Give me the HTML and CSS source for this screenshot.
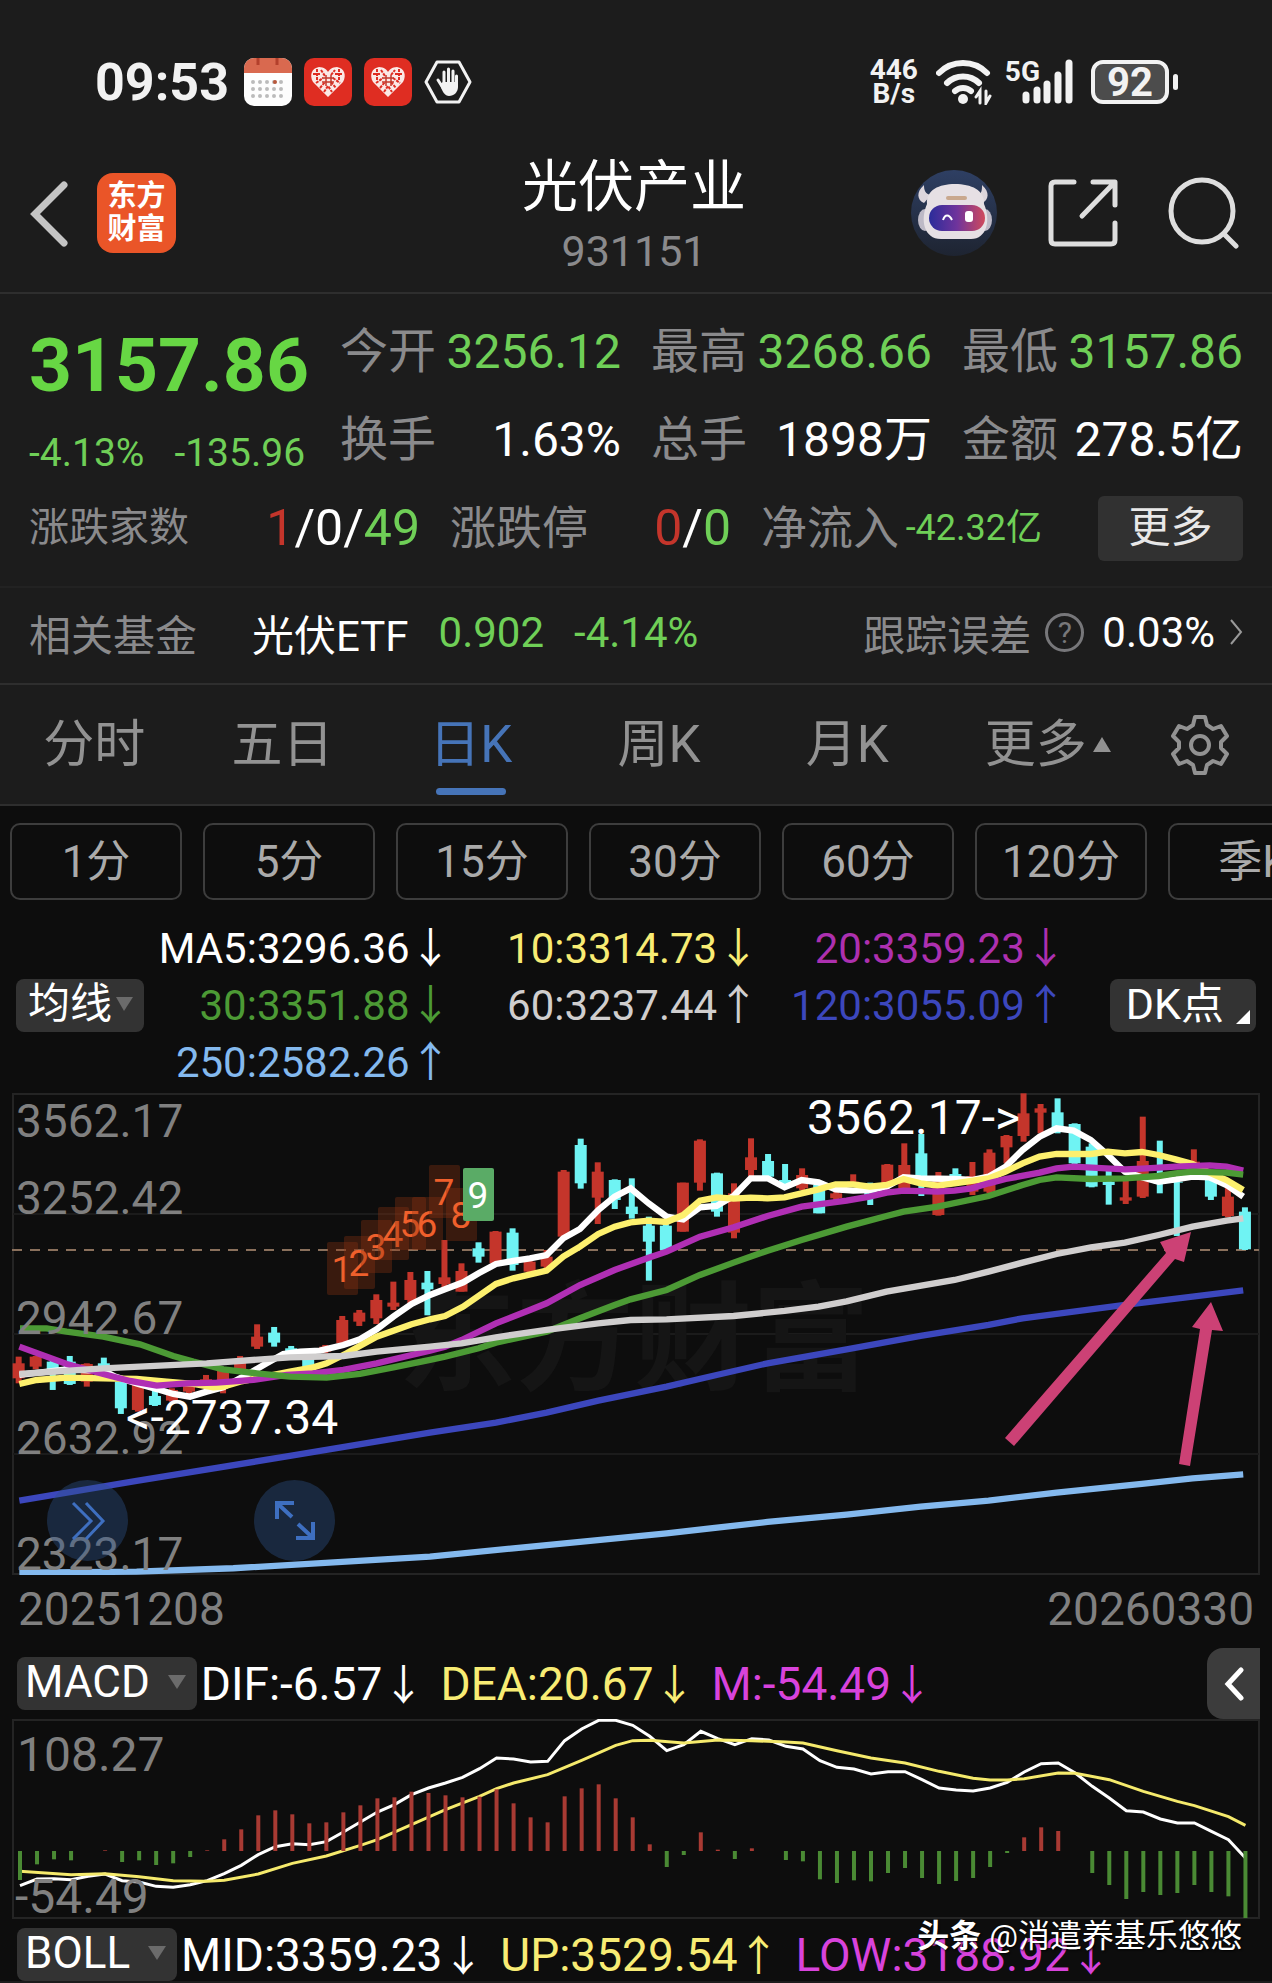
FILE: index.html
```
<!DOCTYPE html>
<html lang="zh-CN">
<head>
  <meta charset="UTF-8">
  <meta name="viewport" content="width=device-width, initial-scale=1">
  <title>光伏产业 931151</title>
  <link rel="stylesheet" href="styles.css">
</head>
<body>
  <div class="status">
    <span class="time">09:53</span>
    <svg class="app-icon" viewBox="0 0 48 48" aria-hidden="true">
      <rect width="48" height="48" rx="10" fill="#fdfdfd"/>
      <path d="M0 15V10A10 10 0 0 1 10 0H38A10 10 0 0 1 48 10V15Z" fill="#d9694f"/>
      <path d="M14 0V7M33 0V7" stroke="#b3402c" stroke-width="3"/>
      <path d="M9 24H40M9 31H40M9 38H40" stroke="#bbb" stroke-width="4" stroke-linecap="round" stroke-dasharray="0 7"/>
      <circle cx="31" cy="24" r="2" fill="#b8583c"/>
    </svg>
    <svg class="app-icon" viewBox="0 0 48 48" aria-hidden="true">
      <rect width="48" height="48" rx="10" fill="#df2d22"/>
      <path d="M24 39L9 24C5 17 8 10 15 9C20 9 23 12 24 14C25 12 28 9 33 9C40 10 43 17 39 24Z" fill="#fbe9e6"/>
      <path d="M9 16H17M13 11V23M17 12L21 18M12 25L19 20M16 30L21 24M20 34L24 28L28 34M27 24L32 30M29 20L36 25M31 16H39M35 11V23M27 17L31 12" stroke="#df2d22" stroke-width="2" fill="none" stroke-dasharray="3 1"/>
      <path d="M18 20H30M18 24H30M22 17V28M27 17V28" stroke="#c33a2c" stroke-width="1.5"/>
    </svg>
    <svg class="app-icon" viewBox="0 0 48 48" aria-hidden="true">
      <rect width="48" height="48" rx="10" fill="#df2d22"/>
      <path d="M24 39L9 24C5 17 8 10 15 9C20 9 23 12 24 14C25 12 28 9 33 9C40 10 43 17 39 24Z" fill="#fbe9e6"/>
      <path d="M9 16H17M13 11V23M17 12L21 18M12 25L19 20M16 30L21 24M20 34L24 28L28 34M27 24L32 30M29 20L36 25M31 16H39M35 11V23M27 17L31 12" stroke="#df2d22" stroke-width="2" fill="none" stroke-dasharray="3 1"/>
      <path d="M18 20H30M18 24H30M22 17V28M27 17V28" stroke="#c33a2c" stroke-width="1.5"/>
    </svg>
    <svg class="app-icon" viewBox="0 0 48 48" aria-hidden="true">
      <path d="M13 4H35L46 24L35 44H13L2 24Z" fill="none" stroke="#f2f2f2" stroke-width="3" stroke-linejoin="round"/>
      <path d="M14 22L19 30M20 14V26M24.500 11V26M29 13V26M32.500 18V28" stroke="#f2f2f2" stroke-width="3" stroke-linecap="round"/>
      <path d="M16 26L19 24H34V29C34 34 30 38 25 38C21 38 18 34 16 26Z" fill="#f2f2f2"/>
    </svg>
    <div class="status-right">
      <span class="speed">446<br>B/s</span>
      <svg width="57" height="46" viewBox="0 0 57 46" fill="none" stroke="#f2f2f2" stroke-width="6" stroke-linecap="round" aria-hidden="true">
        <path d="M3 14A34 34 0 0 1 51 14M11 24A23 23 0 0 1 43 24M19 32A12 12 0 0 1 35 32"/>
        <circle cx="27" cy="40" r="5" fill="#f2f2f2" stroke="none"/>
        <path d="M44 44V32L40 38M50 32V44L54 37" stroke-width="3"/>
      </svg>
      <span class="net">5G</span>
      <svg class="signal" width="51" height="46" viewBox="0 0 51 46" stroke="#f2f2f2" stroke-width="7" stroke-linecap="round" aria-hidden="true">
        <path d="M4 36V41M15 31V41M25 25V41M36 16V41M47 4V41"/>
      </svg>
      <div class="battery">92</div>
    </div>
  </div>

  <header class="header">
    <div class="side">
      <button class="icon-btn" aria-label="返回">
        <svg width="42" height="68" viewBox="0 0 42 68"><path d="M36 6L7 35L36 64" fill="none" stroke="#c4c4c4" stroke-width="7" stroke-linecap="round"/></svg>
      </button>
      <div class="logo">东方<br>财富</div>
    </div>
    <div class="heading">
      <h1>光伏产业</h1>
      <p>931151</p>
    </div>
    <div class="side side-end">
      <button class="icon-btn" aria-label="助手">
        <svg width="87" height="87" viewBox="0 0 87 87">
          <defs>
            <linearGradient id="night" x2="0" y2="1"><stop stop-color="#2e3f63"/><stop offset="1" stop-color="#1e2431"/></linearGradient>
            <linearGradient id="visor"><stop stop-color="#2b2c9a"/><stop offset=".5" stop-color="#6f349c"/><stop offset="1" stop-color="#d04a5c"/></linearGradient>
          </defs>
          <circle cx="43" cy="43" r="43" fill="url(#night)"/>
          <path d="M13 15C5 22 6 30 13 33L20 25C14 24 13 20 13 15ZM71 15C79 22 78 30 71 33L66 25C71 24 71 20 71 15Z" fill="#ddd6dc"/>
          <ellipse cx="14" cy="50" rx="7" ry="11" fill="#bdb9c6"/>
          <ellipse cx="74" cy="50" rx="7" ry="11" fill="#bdb9c6"/>
          <path d="M16 34C15 20 28 14 44 14C60 14 74 20 73 34C80 50 76 69 60 69H30C13 69 9 50 16 34Z" fill="#e6e0e4"/>
          <path d="M37 28H54" stroke="#c9a88e" stroke-width="4" stroke-linecap="round"/>
          <rect x="18" y="35" width="56" height="26" rx="13" fill="url(#visor)"/>
          <path d="M32 50C34 44 38 44 41 50" fill="none" stroke="#fff" stroke-width="2"/>
          <rect x="54" y="41" width="8" height="11" rx="3" fill="#fff"/>
        </svg>
      </button>
      <button class="icon-btn" aria-label="分享">
        <svg width="70" height="70" viewBox="0 0 70 70" fill="none" stroke="#dedede" stroke-width="5" stroke-linecap="round" stroke-linejoin="round">
          <path d="M26 4H7Q3 4 3 8V62Q3 66 7 66H63Q67 66 67 62V45M45 4H67V27M66 5L34 38"/>
        </svg>
      </button>
      <button class="icon-btn" aria-label="搜索">
        <svg width="72" height="72" viewBox="0 0 72 72" fill="none" stroke="#dedede" stroke-width="5" stroke-linecap="round">
          <circle cx="34" cy="34" r="31"/><path d="M56 57L68 69"/>
        </svg>
      </button>
    </div>
  </header>

  <section class="quote">
    <div class="quote-main">
      <div class="price">
        <strong>3157.86</strong>
        <p><span>-4.13%</span><span>-135.96</span></p>
      </div>
      <dl class="stats">
        <div><dt>今开</dt><dd class="down">3256.12</dd></div>
        <div><dt>最高</dt><dd class="down">3268.66</dd></div>
        <div><dt>最低</dt><dd class="down">3157.86</dd></div>
        <div><dt>换手</dt><dd>1.63%</dd></div>
        <div><dt>总手</dt><dd>1898万</dd></div>
        <div><dt>金额</dt><dd>278.5亿</dd></div>
      </dl>
    </div>
    <div class="breadth">
      <div><span class="small-label">涨跌家数</span><span class="value"><i class="up">1</i>/0/<i class="down">49</i></span></div>
      <div><span class="label">涨跌停</span><span class="value"><i class="up">0</i>/<i class="down">0</i></span></div>
      <div><span class="label">净流入</span><span class="flow">-42.32亿</span></div>
      <button class="more">更多</button>
    </div>
  </section>

  <section class="fund">
    <span class="muted">相关基金</span>
    <a href="#" class="fund-name">光伏ETF</a>
    <span class="down">0.902</span>
    <span class="down">-4.14%</span>
    <a href="#" class="tracking">
      <span class="muted">跟踪误差</span>
      <span class="help">?</span>
      <span>0.03%</span>
      <svg width="14" height="28" viewBox="0 0 14 28"><path d="M2 2L12 14L2 26" fill="none" stroke="#999" stroke-width="2"/></svg>
    </a>
  </section>

  <nav class="tabs">
    <a href="#">分时</a>
    <a href="#">五日</a>
    <a href="#" class="active">日K</a>
    <a href="#">周K</a>
    <a href="#">月K</a>
    <a href="#">更多<svg class="tri" width="18" height="15" viewBox="0 0 18 15"><path d="M9 0L18 15H0Z" fill="#929292"/></svg></a>
    <button class="icon-btn" aria-label="设置">
      <svg width="60" height="62" viewBox="0 0 60 62" fill="none" stroke="#929292" stroke-width="4" stroke-linejoin="round">
        <path d="M25 3H35L37 11L43 15L51 12L57 22L51 28V34L57 40L51 50L43 47L37 51L35 59H25L23 51L17 47L9 50L3 40L9 34V28L3 22L9 12L17 15L23 11Z"/>
        <circle cx="30" cy="31" r="9"/>
      </svg>
    </button>
  </nav>

  <main>
    <div class="periods">
      <button>1分</button>
      <button>5分</button>
      <button>15分</button>
      <button>30分</button>
      <button>60分</button>
      <button>120分</button>
      <button>季K</button>
    </div>

    <div class="legend">
      <button class="chip">均线<svg class="chip-tri" width="17" height="14" viewBox="0 0 17 14"><path d="M0 0H17L8 14Z" fill="#6b6b6b"/></svg></button>
      <div class="averages">
        <span class="white">MA5:3296.36<b>↓</b></span>
        <span class="yellow">10:3314.73<b>↓</b></span>
        <span class="purple">20:3359.23<b>↓</b></span>
        <span class="green">30:3351.88<b>↓</b></span>
        <span class="gray">60:3237.44<b>↑</b></span>
        <span class="blue">120:3055.09<b>↑</b></span>
        <span class="sky">250:2582.26<b>↑</b></span>
      </div>
      <button class="chip dk">DK点<svg width="14" height="14" viewBox="0 0 14 14"><path d="M14 0V14H0Z" fill="#fff"/></svg></button>
    </div>

    <div class="chart">
      <svg viewBox="0 0 1248 482" role="img" aria-label="日K线图">
        <rect class="frame" x="1" y="1" width="1246" height="480"/>
        <path class="grid" d="M1 121H1247M1 241H1247M1 361H1247"/>
        <text class="watermark" x="386" y="288">东方财富</text>
        <path class="last-price" d="M0 157H1247"/>
        <g id="candles" transform="translate(-12 -13) scale(.3333)"></g>
        <g id="lines" class="ma" transform="translate(-12 -13) scale(.3333)"></g>
        <g id="counts"></g>
        <g class="axis">
          <text x="4" y="44">3562.17</text>
          <text x="4" y="121">3252.42</text>
          <text x="4" y="241">2942.67</text>
          <text x="4" y="361">2632.92</text>
          <text x="4" y="477">2323.17</text>
        </g>
        <g class="mark">
          <text x="1008" y="41" text-anchor="end">3562.17-&gt;</text>
          <text x="114" y="341">&lt;-2737.34</text>
        </g>
        <g class="pointer">
          <path d="M993 345L1154 160L1148 149L1179 139L1172 169L1163 166L1002 353Z"/>
          <path d="M1167 371L1188 236L1180 234L1199 209L1211 238L1200 237L1178 373Z"/>
        </g>
      </svg>
      <button class="round next" aria-label="快进">
        <svg width="36" height="40" viewBox="0 0 36 40"><path d="M3 2L21 20L3 38M16 2L33 20L16 38" fill="none" stroke="#3e6fc0" stroke-width="3"/></svg>
      </button>
      <button class="round full" aria-label="全屏">
        <svg width="42" height="42" viewBox="0 0 42 42" fill="none" stroke="#3e6fc0" stroke-width="4"><path d="M3 19V3H20M4 4L18 17M39 22V38H22M38 37L24 24"/></svg>
      </button>
    </div>

    <div class="dates"><span>20251208</span><span>20260330</span></div>

    <div class="indicator">
      <button class="chip">MACD<svg class="chip-tri" width="18" height="14" viewBox="0 0 18 14"><path d="M0 0H18L9 14Z" fill="#6b6b6b"/></svg></button>
      <span class="white">DIF:-6.57<b>↓</b></span>
      <span class="yellow">DEA:20.67<b>↓</b></span>
      <span class="pink">M:-54.49<b>↓</b></span>
      <button class="collapse" aria-label="展开">
        <svg width="20" height="34" viewBox="0 0 20 34"><path d="M17 3L4 17L17 31" fill="none" stroke="#fff" stroke-width="5" stroke-linecap="round"/></svg>
      </button>
    </div>

    <div class="chart">
      <svg viewBox="0 0 1248 200" role="img" aria-label="MACD">
        <rect class="frame" x="1" y="1" width="1246" height="198"/>
        <g id="macd"></g>
        <g class="axis axis-macd">
          <text x="5" y="52">108.27</text>
          <text x="3" y="194">-54.49</text>
        </g>
      </svg>
    </div>

    <div class="indicator boll">
      <button class="chip">BOLL<svg class="chip-tri" width="18" height="14" viewBox="0 0 18 14"><path d="M0 0H18L9 14Z" fill="#6b6b6b"/></svg></button>
      <span class="white">MID:3359.23<b>↓</b></span>
      <span class="yellow">UP:3529.54<b>↑</b></span>
      <span class="pink">LOW:3188.92<b>↓</b></span>
      <div class="credit"><strong>头条</strong> @消遣养基乐悠悠</div>
    </div>
  </main>

  <script>
    const NS = 'http://www.w3.org/2000/svg';
    const RED = '#c4352b', CYAN = '#6ff3f3';

    function add(parent, tag, attrs, text) {
      const el = document.createElementNS(NS, tag);
      for (const key in attrs) el.setAttribute(key, attrs[key]);
      if (text) el.textContent = text;
      parent.appendChild(el);
    }

    // colour, high, body top, body bottom, low
    const candles = `r 830 850 895 910|r 828 830 860 868|c 840 845 880 930|c 828 845 912 915|r 850 852 905 920|c 833 850 870 880|c 905 905 985 1002|r 915 915 990 995|c 933 948 975 978|r 925 930 962 965
      |r 915 918 935 945|r 885 898 915 925|r 868 870 900 940|r 828 845 870 880|r 733 770 800 807|c 741 758 788 800|c 798 805 830 840|c 830 835 860 870|r 795 800 815 820|r 708 720 790 800
      |r 690 698 725 738|r 643 660 715 732|r 605 668 680 690|r 576 600 660 670|c 573 608 628 706|r 480 592 612 625|r 550 573 635 635|c 487 505 530 548|r 453 455 550 550|c 445 458 555 572
      |r 535 545 575 580|r 510 530 560 565|r 270 275 470 475|c 176 195 310 326|r 247 275 353 432|c 298 300 360 387|c 295 380 402 416|c 410 437 485 602|c 430 437 510 510|r 308 308 455 455
      |r 178 182 308 332|c 278 280 395 410|r 310 340 458 475|r 175 232 270 290|c 222 243 290 300|c 252 300 315 325|r 265 285 325 330|c 310 315 400 400|r 330 340 355 362|r 283 305 320 320
      |c 308 335 345 375|r 252 254 310 315|r 190 255 325 330|c 162 220 300 348|r 276 290 405 407|c 265 282 295 300|r 246 288 335 345|r 208 218 335 340|r 165 168 202 250|r 40 100 168 185
      |r 72 85 98 160|c 55 97 155 160|c 130 132 250 252|c 190 200 320 322|c 270 305 315 374|r 295 352 362 372|r 110 243 350 354|c 182 295 312 340|c 300 305 308 468|r 208 245 255 260
      |c 280 290 350 360|r 315 350 408 412|c 382 395 508 510`.split('|');
    const candleBox = document.getElementById('candles');
    candles.forEach((row, i) => {
      const [type, high, top, bottom, low] = row.trim().split(' ');
      const x = 56 + 51.1 * i;
      const fill = type === 'r' ? RED : CYAN;
      add(candleBox, 'rect', { x: x - 9, y: high, width: 18, height: low - high, fill });
      add(candleBox, 'rect', { x: x - 18, y: top, width: 36, height: bottom - top, fill });
    });

    const averages = [
      ['#ffffff', '58,885 200,868 312,873 345,890 415,912 480,930 520,942 570,950 620,935 670,922 720,895 740,885 800,850 850,822 900,815 960,812 1030,795 1080,778 1130,748 1180,710 1235,672 1290,645 1335,628 1390,607 1436,580 1488,552 1540,543 1590,535 1640,525 1690,475 1740,447 1795,390 1844,350 1892,325 1946,370 2000,410 2050,418 2100,382 2150,378 2201,348 2252,295 2303,295 2354,322 2405,300 2456,307 2507,328 2560,332 2609,330 2660,320 2711,292 2762,295 2864,297 2915,300 2966,290 3017,260 3068,210 3119,170 3170,145 3221,152 3273,180 3324,225 3375,275 3426,292 3476,305 3527,298 3578,290 3629,292 3680,315 3730,350'],
      ['#fdf06e', '58,912 110,900 200,893 310,895 410,897 500,905 580,912 640,922 670,920 720,905 870,875 940,862 980,850 1040,820 1130,770 1235,733 1290,718 1335,708 1390,680 1488,612 1540,595 1640,572 1690,530 1740,500 1795,462 1844,440 1892,427 1946,422 2000,426 2050,405 2100,362 2150,352 2201,356 2252,353 2303,355 2354,352 2405,340 2456,328 2507,313 2560,313 2609,320 2660,315 2711,297 2762,310 2813,317 2864,310 2966,295 3017,275 3068,250 3119,230 3170,222 3273,222 3324,215 3375,220 3426,216 3476,225 3527,238 3578,252 3629,278 3680,300 3730,330'],
      ['#b02fb4', '58,800 200,852 310,882 390,903 470,917 560,910 650,908 760,900 860,885 940,880 1030,870 1130,850 1235,825 1290,812 1335,800 1385,780 1488,730 1590,690 1640,670 1740,615 1844,570 1946,533 2000,515 2100,470 2201,442 2303,408 2405,380 2540,362 2609,350 2660,338 2711,332 2813,335 2864,332 2915,325 2966,310 3017,297 3119,278 3170,265 3221,260 3375,268 3426,266 3527,260 3629,256 3680,260 3730,272'],
      ['#4c9a35', '60,745 140,745 200,755 310,770 420,793 520,828 580,845 670,868 770,880 870,890 980,893 1080,882 1180,862 1290,840 1335,830 1436,805 1488,788 1640,755 1740,715 1844,675 1892,658 2000,630 2100,585 2201,548 2303,512 2405,480 2540,440 2660,408 2711,395 2813,380 2966,348 3068,315 3119,300 3170,292 3273,297 3375,295 3476,288 3527,280 3578,275 3680,278 3730,284'],
      ['#d0cece', '58,882 310,865 620,850 870,832 1030,828 1130,815 1290,800 1385,790 1488,772 1640,750 1795,730 1892,720 2000,718 2201,708 2354,693 2456,680 2540,664 2660,635 2864,600 2966,575 3068,548 3170,522 3273,502 3375,488 3476,465 3578,440 3680,422 3730,415'],
      ['#3c47bd', '58,1262 410,1203 870,1128 1290,1058 1488,1028 1640,998 1795,962 2000,920 2150,885 2303,850 2540,808 2762,768 2966,735 3068,715 3221,695 3375,675 3578,650 3730,631'],
      ['#84b9ee', '58,1478 410,1475 700,1465 1290,1430 1540,1405 1740,1386 2000,1360 2303,1326 2540,1304 2762,1280 2966,1262 3170,1238 3426,1212 3578,1195 3730,1183']
    ];
    averages.forEach(([stroke, points]) => add(document.getElementById('lines'), 'polyline', { points, stroke }));

    const counts = [[315, 149], [332, 143], [349, 127], [366, 114], [383, 104], [400, 104], [417, 72], [434, 95], [451, 75]];
    const countBox = document.getElementById('counts');
    counts.forEach(([x, y], i) => {
      const last = i === 8 ? ' last' : '';
      add(countBox, 'rect', { x, y, width: 31, height: 53, rx: 2, class: 'count-box' + last });
      add(countBox, 'text', { x: x + 15, y: y + 40, class: 'count' + last }, String(i + 1));
    });

    const bars = [-87, -40, -25, -28, 0, 2, -33, -28, -42, -37, -18, 2, 35, 65, 107, 122, 110, 83, 86, 116, 137, 158, 161, 178, 174, 167, 161, 163, 185, 143, 101, 86, 164, 188, 200, 158, 101, 20, -48, -12, 56, 4, -24, 8, 0, -27, -31, -85, -96, -88, -91, -66, -51, -81, -99, -90, -81, -48, -6, 41, 71, 60, 0, -66, -102, -144, -123, -132, -126, -102, -123, -136, -201];
    const dif = [953, 933, 932, 935, 925, 918, 938, 942, 955, 958, 950, 938, 917, 892, 860, 836, 827, 830, 821, 792, 762, 732, 710, 680, 660, 645, 628, 602, 570, 573, 582, 580, 518, 483, 457, 457, 472, 505, 548, 530, 490, 512, 530, 512, 516, 535, 543, 578, 598, 603, 618, 611, 611, 635, 660, 666, 669, 660, 643, 612, 587, 585, 615, 655, 690, 728, 732, 753, 765, 765, 790, 815, 870];
    const dea = [[0, 910], [3, 920], [5, 917], [7, 926], [9, 938], [11, 940], [12, 937], [14, 918], [16, 886], [18, 864], [20, 832], [21, 815], [23, 770], [25, 725], [27, 685], [28, 662], [29, 645], [31, 620], [33, 577], [35, 532], [36, 518], [37, 517], [39, 525], [41, 516], [43, 518], [45, 522], [46, 525], [48, 548], [50, 570], [52, 585], [54, 610], [56, 631], [57, 636], [58, 636], [59, 632], [61, 615], [62, 616], [64, 635], [66, 670], [68, 700], [69, 713], [71, 746], [72, 772]];
    const macd = document.getElementById('macd');
    const px = i => 8 + 17.02 * i;
    const py = v => v / 3 - 151;
    add(macd, 'polyline', { points: dif.map((v, i) => px(i) + ',' + py(v)).join(' '), class: 'curve', stroke: '#fff' });
    add(macd, 'polyline', { points: dea.map(([i, v]) => px(i) + ',' + py(v)).join(' '), class: 'curve', stroke: '#f5ea6c' });
    bars.forEach((v, i) => {
      add(macd, 'rect', { x: px(i) - 2, y: v > 0 ? 132 - v / 3 : 132, width: 4, height: Math.abs(v) / 3, fill: v > 0 ? '#a83a33' : '#4a8a34' });
    });
  </script>
</body>
</html>
```
FILE: styles.css
```
* { margin: 0; padding: 0; box-sizing: border-box; }
body { font-family: Roboto, "Noto Sans CJK SC", sans-serif; background: #1c1c1c; color: #fff; overflow-x: hidden; }
button { font: inherit; color: inherit; border: none; background: none; cursor: pointer; }
a { color: inherit; text-decoration: none; }
i { font-style: normal; }
svg { display: block; flex-shrink: 0; }

.up { color: #c4352b; }
.down { color: #6fcf57; }
.muted { color: #8a8a8c; }
.white { color: #fff; }
.yellow { color: #f8ec74; }
.purple { color: #ad30b0; }
.green { color: #4c9a35; }
.gray { color: #d0cece; }
.blue { color: #3c47bd; }
.sky { color: #84b9ee; }
.pink { color: #d843dc; }

/* status bar */
.status { display: flex; align-items: center; gap: 12px; height: 130px; padding: 34px 103px 0 95px; color: #f2f2f2; font-weight: bold; }
.time { margin-right: 3px; font-size: 52px; }
.app-icon { width: 48px; height: 48px; }
.status-right { display: flex; align-items: center; gap: 18px; margin-left: auto; }
.speed { font-size: 28px; line-height: 24px; text-align: center; }
.net { font-size: 28px; line-height: 28px; align-self: flex-start; margin: 0 -36px 0 -6px; }
.battery { position: relative; width: 78px; height: 44px; border: 4px solid #f2f2f2; border-radius: 12px; background: #4c4c4c; font-size: 40px; line-height: 37px; text-align: center; }
.battery::after { content: ""; position: absolute; right: -13px; top: 10px; width: 5px; height: 16px; border-radius: 3px; background: #f2f2f2; }

/* header */
.header { display: flex; align-items: center; height: 164px; padding: 4px 32px 0 28px; border-bottom: 2px solid #2e2e2e; }
.side { display: flex; align-items: center; gap: 27px; flex: 1; }
.side-end { justify-content: flex-end; gap: 50px; }
.logo { width: 79px; height: 80px; padding-top: 7px; border-radius: 16px; background: #ea5528; font-size: 29px; line-height: 33px; font-weight: bold; text-align: center; }
.heading { padding-top: 8px; text-align: center; }
.heading h1 { font-size: 56px; line-height: 68px; font-weight: normal; }
.heading p { font-size: 43px; line-height: 60px; color: #8a8a8c; }

/* quote */
.quote { padding: 14px 29px; border-bottom: 2px solid #222; }
.quote-main { display: grid; grid-template-columns: 311px 1fr; }
.price { color: #67d744; }
.price strong { display: block; font-size: 75px; line-height: 114px; }
.price p { display: flex; gap: 30px; font-size: 39px; line-height: 62px; color: #6fcf57; }
.stats { display: grid; grid-template-columns: repeat(3, 1fr); column-gap: 30px; line-height: 88px; }
.stats div { display: flex; justify-content: space-between; white-space: nowrap; }
.stats dt, .stats dd { font-size: 48px; }
.stats dt { color: #8a8a8c; }
.breadth { display: grid; grid-template-columns: 391fr 281fr 281fr 171fr; column-gap: 30px; align-items: center; line-height: 88px; height: 88px; }
.breadth div { display: flex; justify-content: space-between; white-space: nowrap; }
.small-label { font-size: 40px; color: #8a8a8c; }
.label { font-size: 46px; color: #8a8a8c; }
.value { font-size: 50px; }
.flow { font-size: 36px; color: #6fcf57; }
.more { justify-self: end; width: 145px; height: 65px; border-radius: 6px; background: #313131; color: #e8e8e8; font-size: 42px; line-height: 60px; }

/* related fund */
.fund { display: flex; align-items: center; gap: 30px; height: 97px; padding: 0 29px 7px; border-bottom: 2px solid #2e2e2e; font-size: 42px; white-space: nowrap; }
.fund-name { margin-left: 25px; }
.tracking { display: flex; align-items: center; gap: 14px; margin-left: auto; }
.help { width: 39px; height: 39px; margin-right: 4px; border: 3px solid #77777a; border-radius: 50%; color: #77777a; font-size: 30px; line-height: 34px; text-align: center; }

/* tabs */
.tabs { display: grid; grid-template-columns: repeat(5, 188fr) 212fr 92fr; align-items: center; justify-items: center; height: 121px; padding-right: 26px; border-bottom: 2px solid #2e2e2e; font-size: 51px; color: #929292; }
.tabs a { position: relative; display: flex; align-items: center; line-height: 119px; }
.tabs .active { color: #4674b8; }
.tabs .active::after { content: ""; position: absolute; left: 50%; bottom: 9px; width: 70px; height: 7px; margin-left: -35px; border-radius: 4px; background: #4674b8; }
.tri { margin-left: 6px; }

main { background: #0d0d0d; overflow: hidden; }
.periods { display: flex; gap: 21px; padding: 17px 0 20px 10px; overflow: hidden; }
.periods button { flex: 0 0 172px; height: 77px; border: 2px solid #3d3d3d; border-radius: 10px; color: #aaa; font-size: 44px; line-height: 66px; }

.legend { display: flex; align-items: center; padding: 0 16px; }
.averages { flex: 1; display: grid; grid-template-columns: repeat(3, 1fr); margin-right: 43px; font-size: 42px; line-height: 57px; text-align: right; white-space: nowrap; }
.averages b, .indicator b { display: inline-block; font-family: "Noto Sans CJK SC", sans-serif; font-size: 42px; line-height: 50px; font-weight: normal; }
.chip { display: flex; align-items: center; gap: 4px; height: 53px; padding: 0 11px 4px 12px; border-radius: 8px; background: #333; font-size: 42px; line-height: 48px; white-space: nowrap; }
.dk { gap: 12px; padding: 0 6px 4px 16px; font-size: 43px; }
.dk svg { align-self: flex-end; margin-bottom: 4px; }

/* charts */
.chart { position: relative; margin: 2px 12px 0; }
.chart > svg { width: 100%; height: auto; }
.frame { fill: none; stroke: #242424; stroke-width: 2; }
.grid { stroke: #1b1b1b; stroke-width: 2; }
.last-price { stroke: #8a705c; stroke-width: 2; stroke-dasharray: 10 8; }
.watermark { font-size: 118px; font-weight: bold; fill: #151515; }
.ma { fill: none; stroke-width: 19; }
.curve { fill: none; stroke-width: 3; }
.axis { font-size: 46px; fill: #808080; }
.axis-macd { font-size: 48px; }
.mark { font-size: 48px; fill: #fff; }
.count { font-size: 37px; fill: #f0602c; text-anchor: middle; }
.count.last { fill: #fff; }
.count-box { fill: #8c3510; fill-opacity: 0.35; }
.count-box.last { fill: #5aab66; fill-opacity: 1; }
.pointer { fill: #cc4175; }
.round { position: absolute; top: 387px; display: flex; align-items: center; justify-content: center; width: 81px; height: 81px; border-radius: 50%; background: rgba(46, 83, 138, 0.4); }
.next { left: 35px; }
.full { left: 242px; }

.dates { display: flex; justify-content: space-between; padding: 0 18px; font-size: 46px; line-height: 68px; color: #808080; }
.indicator { position: relative; display: flex; align-items: center; height: 76px; padding: 5px 12px 0 17px; font-size: 46px; white-space: nowrap; }
.indicator .chip { margin-right: 4px; padding-left: 8px; font-size: 44px; }
.indicator .chip-tri { margin-left: 14px; }
.indicator span { margin-right: 16px; }
.collapse { display: flex; align-items: center; justify-content: center; align-self: flex-end; width: 53px; height: 71px; margin-left: auto; border-radius: 16px 0 0 16px; background: #3c3c3c; }
.indicator + .chart { margin-top: 0; }
.boll { height: 62px; padding-top: 9px; }
.credit { position: absolute; right: 30px; top: -6px; font-size: 32px; line-height: 46px; text-shadow: 1px 1px 2px #000; }
```
